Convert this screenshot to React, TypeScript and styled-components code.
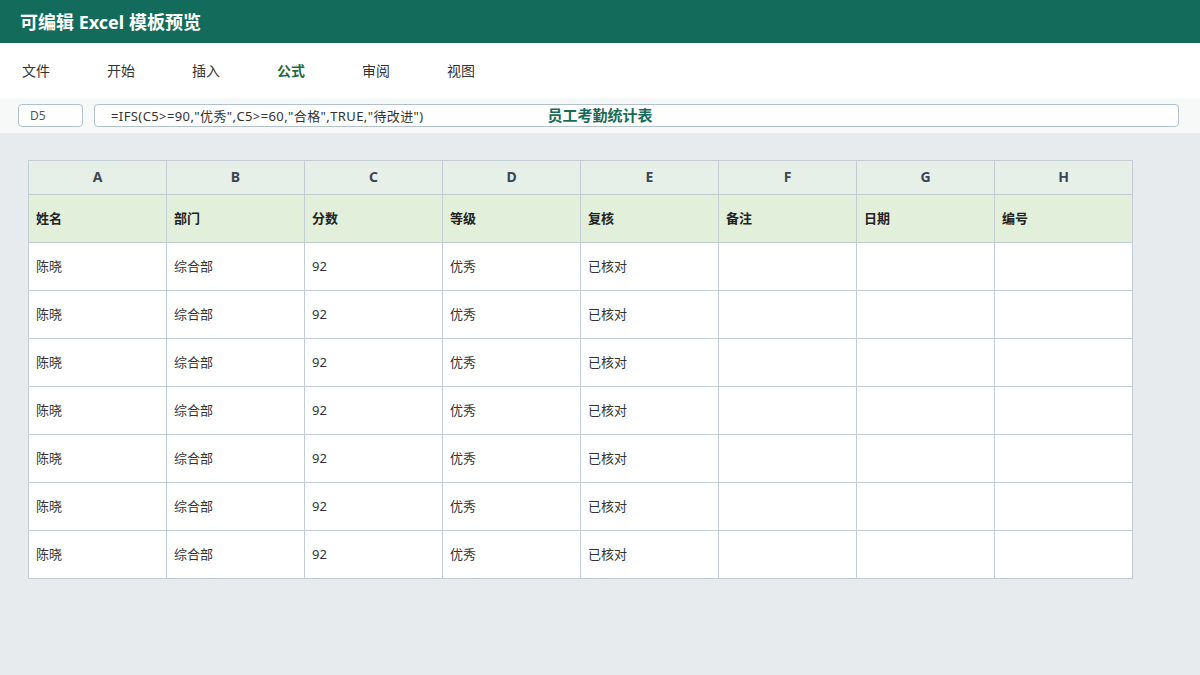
import styled, { createGlobalStyle } from "styled-components"

const GlobalStyle = createGlobalStyle`
    html, body {
        margin: 0;
        padding: 0;
        background: #e8ebee;
    }
    body {
        font-family: "Noto Sans", "Noto Sans CJK SC", sans-serif;
        color: #333;
    }
`;

const Page = styled.div`
    width: 1200px;
    height: 675px;
    display: flex;
    flex-direction: column;
    background: #e8ebee;
`;

const Header = styled.header`
    height: 43px;
    background: #136b5b;
    display: flex;
    align-items: center;
    padding: 0 0 1px 20px;
    box-sizing: border-box;
`;

const AppTitle = styled.h1`
    margin: 0;
    font-size: 18px;
    font-weight: bold;
    color: #fff;
`;

const Menu = styled.nav`
    height: 55px;
    box-sizing: border-box;
    padding: 0 0 2px 22px;
    background: #fff;
    display: flex;
    align-items: center;
    gap: 57px;
`;

const MenuItem = styled.span<{ $active?: boolean }>`
    font-size: 14px;
    width: 28px;
    white-space: nowrap;
    color: ${p => p.$active ? "#1e6b45" : "#333"};
    font-weight: ${p => p.$active ? "bold" : "normal"};
`;

const FormulaBar = styled.div`
    position: relative;
    height: 35px;
    background: #f7f8f8;
    display: flex;
    align-items: center;
    gap: 11px;
    padding: 0 21px 0 18px;
`;

const Box = styled.div`
    height: 23px;
    box-sizing: border-box;
    border: 1px solid #b3c2ca;
    border-radius: 4px;
    background: #fff;
    display: flex;
    align-items: center;
    padding-bottom: 1px;
    font-size: 13px;
    color: #333;
`;

const NameBox = styled(Box)`
    width: 65px;
    padding-left: 11px;
    font-size: 12px;
    color: #555;
`;

const FormulaInput = styled(Box)`
    flex: 1;
    padding-left: 16px;
    letter-spacing: 0.4px;
`;

const SheetTitle = styled.div`
    position: absolute;
    left: 0;
    right: 0;
    top: 0;
    bottom: 0;
    display: flex;
    align-items: center;
    justify-content: center;
    padding-bottom: 3px;
    font-size: 15px;
    font-weight: bold;
    color: #176b57;
    pointer-events: none;
`;

const Sheet = styled.div`
    padding: 27px 0 0 28px;
`;

const Grid = styled.div`
    display: grid;
    grid-template-columns: repeat(8, 138px);
    width: max-content;
    border-top: 1px solid #c1ccd3;
    border-left: 1px solid #c1ccd3;
`;

const Cell = styled.div<{ $kind: "col" | "label" | "data" }>`
    box-sizing: border-box;
    border-right: 1px solid #c1ccd3;
    border-bottom: 1px solid #c1ccd3;
    display: flex;
    align-items: center;
    padding-bottom: 2px;
    font-size: ${p => p.$kind === "col" ? "14px" : "13px"};
    height: ${p => p.$kind === "col" ? "34px" : "48px"};
    justify-content: ${p => p.$kind === "col" ? "center" : "flex-start"};
    padding-left: ${p => p.$kind === "col" ? "0" : "7px"};
    background: ${p => p.$kind === "col" ? "#e7efe9" : p.$kind === "label" ? "#e2efda" : "#fff"};
    font-weight: ${p => p.$kind === "data" ? "normal" : "bold"};
    color: ${p => p.$kind === "col" ? "#3a4650" : p.$kind === "label" ? "#222" : "#333"};
`;

const menus = ["文件", "开始", "插入", "公式", "审阅", "视图"];
const cols = ["A", "B", "C", "D", "E", "F", "G", "H"];
const labels = ["姓名", "部门", "分数", "等级", "复核", "备注", "日期", "编号"];
const row = ["陈晓", "综合部", "92", "优秀", "已核对", "", "", ""];
const rows = Array.from({ length: 7 }, () => row);

const App = () => {
    return (
        <Page>
            <GlobalStyle />
            <Header>
                <AppTitle>可编辑 Excel 模板预览</AppTitle>
            </Header>
            <Menu>
                {menus.map(m => <MenuItem key={m} $active={m === "公式"}>{m}</MenuItem>)}
            </Menu>
            <FormulaBar>
                <NameBox>D5</NameBox>
                <FormulaInput>=IFS(C5&gt;=90,"优秀",C5&gt;=60,"合格",TRUE,"待改进")</FormulaInput>
                <SheetTitle>员工考勤统计表</SheetTitle>
            </FormulaBar>
            <Sheet>
                <Grid>
                    {cols.map(c => <Cell key={c} $kind="col">{c}</Cell>)}
                    {labels.map(l => <Cell key={l} $kind="label">{l}</Cell>)}
                    {rows.map((r, i) => r.map((v, j) => <Cell key={`${i}-${j}`} $kind="data">{v}</Cell>))}
                </Grid>
            </Sheet>
        </Page>
    )
}

export default App;
